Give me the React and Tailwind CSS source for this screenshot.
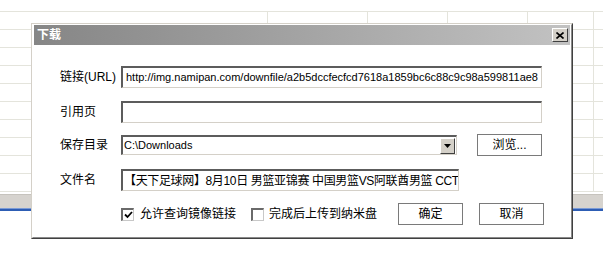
import React from 'react';

const font = "font-['Liberation_Sans','Noto_Sans_CJK_SC',sans-serif]";
const sunken =
  'border-t-2 border-l-2 border-b border-r border-t-[#5c5c5c] border-l-[#5c5c5c] border-b-[#d4d0c8] border-r-[#d4d0c8] bg-white';

const Row = () => (
  <div className="flex h-[18px]">
    <div className="w-[268px] shrink-0 border-r border-b border-[#e4e4dc]" />
    <div className="w-[100px] shrink-0 border-r border-b border-[#e4e4dc]" />
    <div className="w-[80px] shrink-0 border-r border-b border-[#e4e4dc]" />
    <div className="w-[80px] shrink-0 border-r border-b border-[#e4e4dc]" />
    <div className="w-[66px] shrink-0 border-r border-b border-[#e4e4dc]" />
    <div className="flex-1 border-b border-[#e4e4dc]" />
  </div>
);

const Sheet = () => (
  <div className="flex flex-col">
    <div className="h-[12px] border-b border-[#e4e4dc]" />
    {Array.from({ length: 10 }).map((_, i) => (
      <Row key={i} />
    ))}
    <div className="h-[2px]" />
    <div className="h-[1px] bg-[#c6c3bd]" />
    <div className="h-[13px] bg-[#d6d3ce]" />
    <div className="h-[1px] bg-[#7b9bd6]" />
    <div className="h-[2px] bg-[#2d5db4]" />
  </div>
);

const Button = ({ children }) => (
  <div className="w-[65px] h-[22px] shrink-0 flex items-center justify-center border border-[#7a7a7a] bg-white text-[12px] text-black">
    {children}
  </div>
);

const Check = ({ checked }) => (
  <div className="w-[13px] h-[13px] shrink-0 border-t-2 border-l-2 border-b border-r border-t-[#6a6a6a] border-l-[#6a6a6a] border-b-[#c8c8c8] border-r-[#c8c8c8] bg-white flex items-center justify-center">
    {checked && (
      <svg width="9" height="8" viewBox="0 0 9 8">
        <path d="M1 3.5 L3.5 6 L8 1" fill="none" stroke="#000" strokeWidth="1.8" />
      </svg>
    )}
  </div>
);

const Label = ({ children }) => (
  <div className="w-[61px] shrink-0 text-[12px] text-black leading-none whitespace-nowrap">{children}</div>
);

export default function App() {
  return (
    <div className={`relative w-[603px] h-[273px] overflow-hidden bg-white ${font}`}>
      <Sheet />

      <div className="absolute left-[31px] top-[23px] w-[542px] h-[216px] border-t border-l border-[#d4d0c8] border-r border-b border-r-[#404040] border-b-[#404040]">
        <div className="h-full border-t border-l border-white border-r border-b border-r-[#8a8a8a] border-b-[#8a8a8a] bg-white flex flex-col">
          <div className="h-[20px] mx-[1px] flex items-center justify-between bg-linear-to-r from-[#868686] to-[#c2c2c2] pl-[3px] pr-[2px]">
            <span className="text-[12px] font-bold text-white leading-none">下载</span>
            <div className="w-[16px] h-[14px] bg-[#d4d0c8] border-t border-l border-white border-r border-b border-r-[#404040] border-b-[#404040] flex items-center justify-center">
              <svg width="8" height="7" viewBox="0 0 8 7">
                <path d="M0.5 0.5 L7.5 6.5 M7.5 0.5 L0.5 6.5" stroke="#000" strokeWidth="1.6" />
              </svg>
            </div>
          </div>

          <div className="flex flex-col pl-[27px] pr-[29px]">
            <div className="mt-[21px] flex items-center h-[22px]">
              <Label>链接(URL)</Label>
              <div className={`flex-1 h-[22px] ${sunken} flex items-center pl-[3px] overflow-hidden whitespace-nowrap text-[11px] text-black`}>
                http://img.namipan.com/downfile/a2b5dccfecfcd7618a1859bc6c88c9c98a599811ae8
              </div>
            </div>

            <div className="mt-[13px] flex items-center h-[22px]">
              <Label>引用页</Label>
              <div className={`flex-1 h-[22px] ${sunken}`} />
            </div>

            <div className="mt-[11px] flex items-center h-[22px]">
              <Label>保存目录</Label>
              <div className={`w-[336px] h-[20px] ${sunken} flex items-center justify-between pl-[1px] pr-[1px]`}>
                <span className="text-[11px] text-black leading-none">C:\Downloads</span>
                <div className="w-[15px] h-[16px] bg-[#d4d0c8] border-t border-l border-white border-r border-b border-r-[#404040] border-b-[#404040] flex items-center justify-center">
                  <svg width="7" height="4" viewBox="0 0 7 4">
                    <path d="M0 0 H7 L3.5 4 Z" fill="#000" />
                  </svg>
                </div>
              </div>
              <div className="ml-[20px]">
                <Button>浏览...</Button>
              </div>
            </div>

            <div className="mt-[13px] flex items-center h-[22px]">
              <Label>文件名</Label>
              <div className={`w-[338px] h-[22px] ${sunken} flex items-center pl-[1px] overflow-hidden whitespace-nowrap text-[12px] tracking-[-0.35px] text-black`}>
                【天下足球网】8月10日 男篮亚锦赛 中国男篮VS阿联酋男篮 CCT
              </div>
            </div>

            <div className="mt-[12px] flex items-center h-[22px] text-[12px] text-black whitespace-nowrap">
              <div className="w-[61px] shrink-0" />
              <Check checked />
              <span className="ml-[6px] shrink-0">允许查询镜像链接</span>
              <div className="ml-[15px] shrink-0">
                <Check />
              </div>
              <span className="ml-[5px] shrink-0">完成后上传到纳米盘</span>
              <div className="ml-[21px] shrink-0">
                <Button>确定</Button>
              </div>
              <div className="ml-[16px] shrink-0">
                <Button>取消</Button>
              </div>
            </div>
          </div>
        </div>
      </div>
    </div>
  );
}
